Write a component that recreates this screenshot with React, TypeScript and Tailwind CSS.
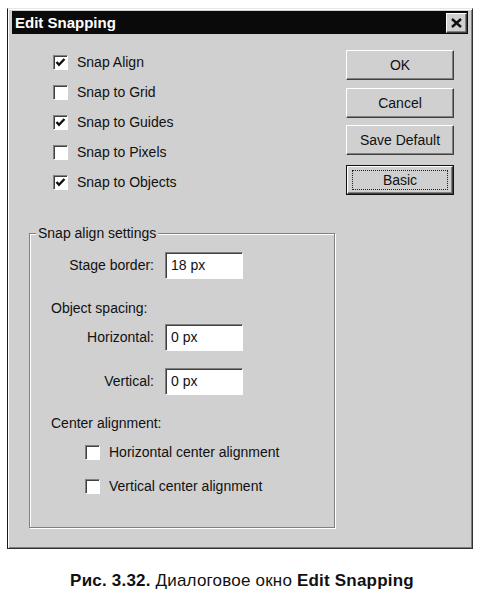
import React from "react";

const raised =
  "border border-t-white border-l-white border-r-[#404040] border-b-[#404040] shadow-[inset_-1px_-1px_0_#808080] bg-[#d0d0d0]";
const sunken =
  "border border-t-[#808080] border-l-[#808080] border-r-white border-b-white shadow-[inset_1px_1px_0_#404040] bg-white";

function Check({ checked }: { checked?: boolean }) {
  return (
    <div className={"w-[15px] h-[15px] shrink-0 flex items-center justify-center " + sunken}>
      {checked && (
        <svg width="11" height="11" viewBox="0 0 11 11">
          <path d="M1.5 5 L4 7.8 L9.5 2" stroke="#111" strokeWidth="2.4" fill="none" />
        </svg>
      )}
    </div>
  );
}

function CheckRow({ label, checked, h }: { label: string; checked?: boolean; h: string }) {
  return (
    <div className={"flex items-center gap-[9px] " + h}>
      <Check checked={checked} />
      <span>{label}</span>
    </div>
  );
}

function Btn({ label, def, mt }: { label: string; def?: boolean; mt: string }) {
  if (def) {
    return (
      <div className={"w-[108px] h-[30px] border border-[#111] " + mt}>
        <div className={"w-full h-full flex items-center justify-center " + raised}>
          <div className="w-[96px] h-[20px] border border-dotted border-[#222] flex items-center justify-center">
            {label}
          </div>
        </div>
      </div>
    );
  }
  return (
    <div className={"w-[108px] h-[30px] flex items-center justify-center " + raised + " " + mt}>
      {label}
    </div>
  );
}

function Field({ value }: { value: string }) {
  return (
    <div className={"w-[78px] h-[27px] flex items-center pl-[5px] " + sunken}>{value}</div>
  );
}

export default function App() {
  return (
    <div className="w-[484px] h-[593px] bg-white font-['Liberation_Sans',Arial,sans-serif] text-[14px] text-[#111] overflow-hidden">
      <div className="ml-[7px] mt-[8px] w-[466px] h-[541px] border border-l-[#1a1a1a] border-t-[#e6e6e6] border-r-[#303030] border-b-[#303030] shadow-[inset_1px_1px_0_#fff,inset_-1px_-1px_0_#808080] bg-[#d0d0d0] pt-[2px] px-[4px] flex flex-col">
        <div className="h-[23px] bg-[#0a0a0a] flex items-center justify-between pl-[3px] pr-[1px]">
          <span className="text-white font-bold text-[15px] leading-none">Edit Snapping</span>
          <div className={"w-[21px] h-[20px] flex items-center justify-center " + raised}>
            <svg width="11" height="10" viewBox="0 0 11 10">
              <path d="M1 1 L10 9 M10 1 L1 9" stroke="#111" strokeWidth="2.4" />
            </svg>
          </div>
        </div>
        <div className="flex flex-1">
          <div className="w-[334px] flex flex-col">
            <div className="ml-[41px] mt-[13px] flex flex-col">
              <CheckRow label="Snap Align" checked h="h-[30px]" />
              <CheckRow label="Snap to Grid" h="h-[30px]" />
              <CheckRow label="Snap to Guides" checked h="h-[30px]" />
              <CheckRow label="Snap to Pixels" h="h-[30px]" />
              <CheckRow label="Snap to Objects" checked h="h-[30px]" />
            </div>
            <fieldset className="ml-[17px] mt-[28px] w-[306px] h-[303px] border border-[#808080] shadow-[1px_1px_0_#fff,inset_1px_1px_0_#fff] pt-[10px] flex flex-col">
              <legend className="ml-[6px] px-[2px] h-[17px] leading-[17px] bg-[#d0d0d0]">Snap align settings</legend>
              <div className="flex items-center h-[27px]">
                <span className="w-[124px] text-right">Stage border:</span>
                <div className="ml-[11px]"><Field value="18 px" /></div>
              </div>
              <div className="ml-[21px] mt-[20px] h-[18px] leading-[18px]">Object spacing:</div>
              <div className="flex items-center h-[27px] mt-[7px]">
                <span className="w-[124px] text-right">Horizontal:</span>
                <div className="ml-[11px]"><Field value="0 px" /></div>
              </div>
              <div className="flex items-center h-[27px] mt-[17px]">
                <span className="w-[124px] text-right">Vertical:</span>
                <div className="ml-[11px]"><Field value="0 px" /></div>
              </div>
              <div className="ml-[21px] mt-[19px] h-[18px] leading-[18px]">Center alignment:</div>
              <div className="ml-[55px] mt-[3px] flex flex-col">
                <CheckRow label="Horizontal center alignment" h="h-[34px]" />
                <CheckRow label="Vertical center alignment" h="h-[34px]" />
              </div>
            </fieldset>
          </div>
          <div className="flex flex-col">
            <Btn label="OK" mt="mt-[16px]" />
            <Btn label="Cancel" mt="mt-[8px]" />
            <Btn label="Save Default" mt="mt-[7px]" />
            <Btn label="Basic" def mt="mt-[10px]" />
          </div>
        </div>
      </div>
      <div className="mt-[21px] text-center text-[17px] leading-[21px] tracking-[0.2px] text-[#111]">
        <span className="font-bold">Рис. 3.32.</span> Диалоговое окно <span className="font-bold">Edit Snapping</span>
      </div>
    </div>
  );
}
